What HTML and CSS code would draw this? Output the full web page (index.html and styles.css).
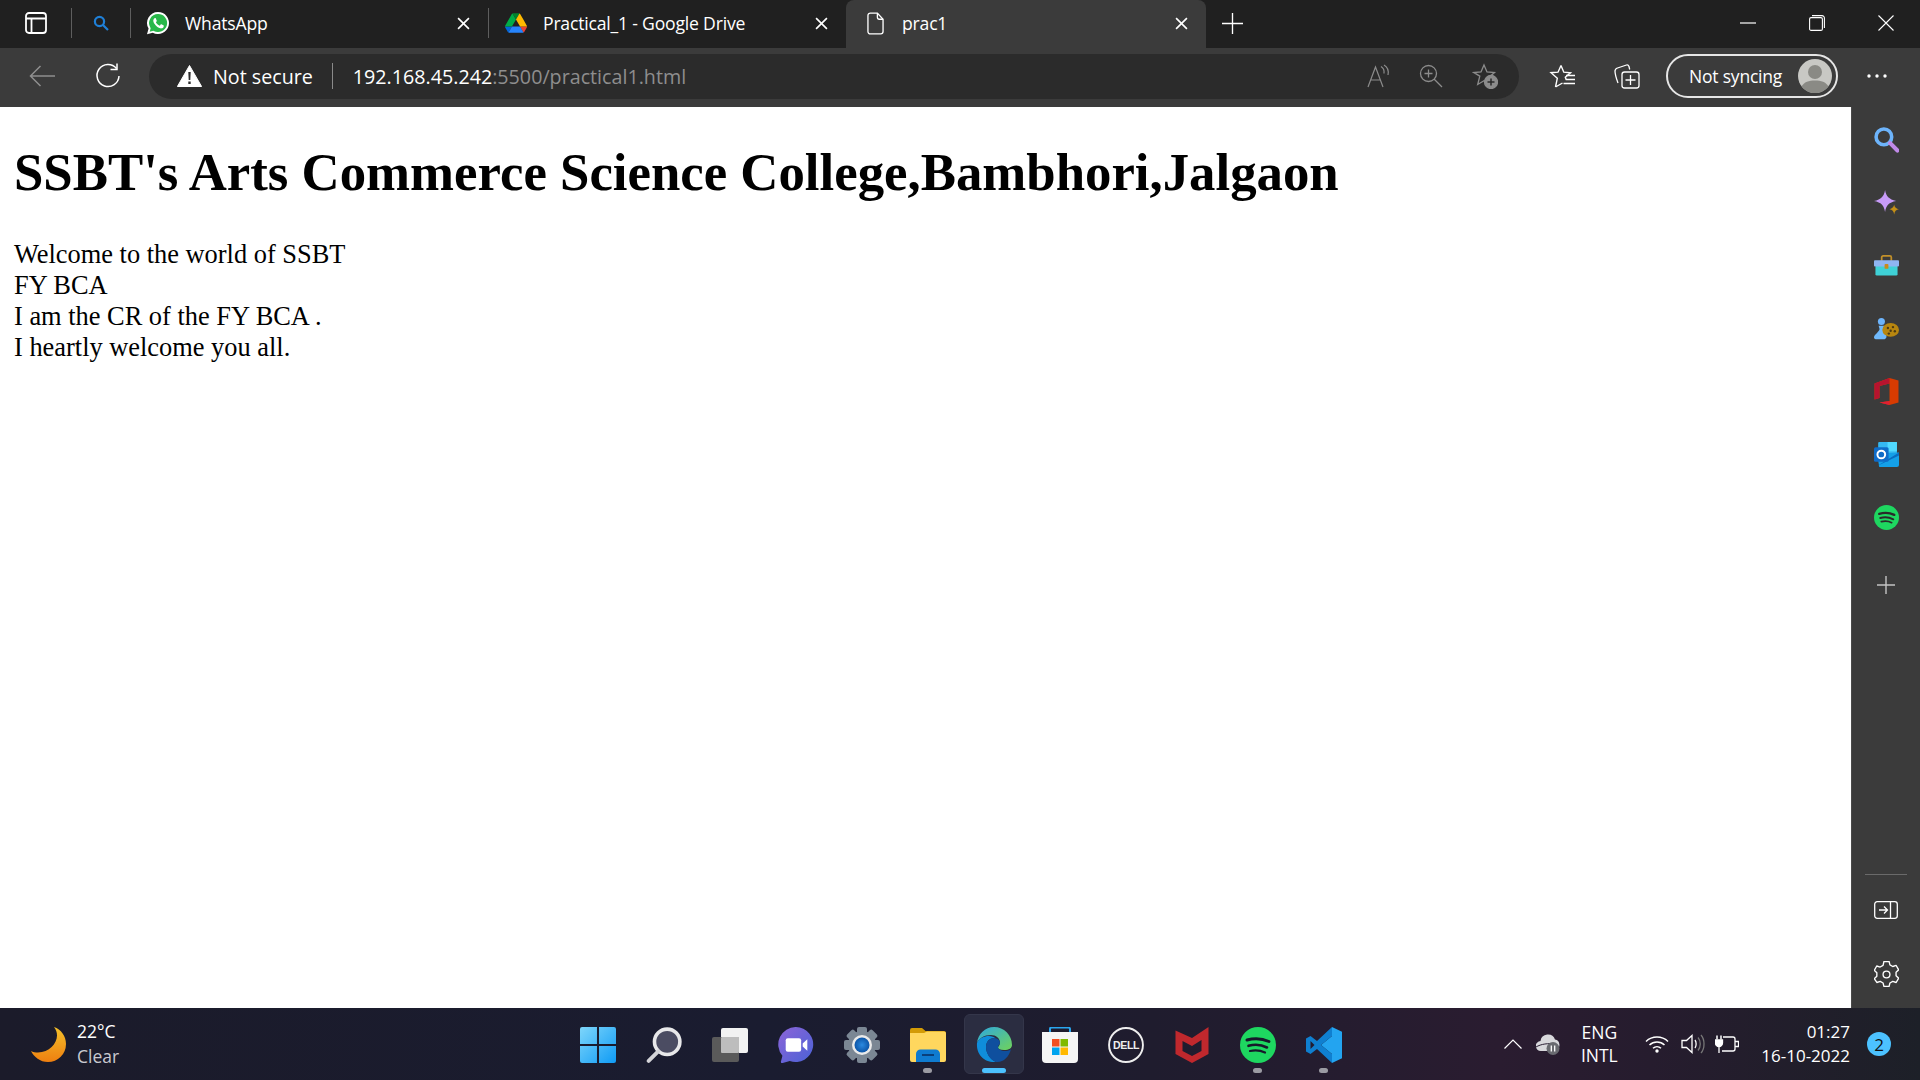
FILE: index.html
```html
<!DOCTYPE html>
<html lang="en">
<head>
<meta charset="utf-8">
<title>prac1</title>
<link rel="stylesheet" href="styles.css">
</head>
<body>
<header class="browser">
  <div class="tabstrip">
    <div class="strip-start">
      <svg class="ico workspace" viewBox="0 0 22 22" fill="none" stroke="#fff" stroke-width="1.8"><rect x="1" y="1" width="20" height="20" rx="3"/><path d="M1 6.5h20M6.5 6.5V21"/></svg>
      <span class="vsep first"></span>
      <svg class="ico mini-search" viewBox="0 0 16 16" fill="none" stroke="#1f7fd6" stroke-width="2.2"><circle cx="6.5" cy="6.5" r="4.6"/><path d="M10 10l5 5"/></svg>
      <span class="vsep"></span>
    </div>
    <div class="tab">
      <svg class="ico tab-fav" viewBox="0 0 24 24"><path d="M12 1a11 11 0 0 0-9.4 16.6L1 23.2l5.8-1.5A11 11 0 1 0 12 1z" fill="#fff"/><path d="M12 3a9 9 0 0 0-7.6 13.7l.3.4-1 3.6 3.7-1 .4.2A9 9 0 1 0 12 3z" fill="#29b84a"/><path d="M8.9 6.9c-.3 0-.7.1-1 .5-.4.4-1.2 1.2-1.2 2.8s1.2 3.3 1.4 3.5c.2.2 2.4 3.7 5.8 5 .9.3 1.9.4 2.6.3.8-.1 2.1-.9 2.3-1.7.3-.8.3-1.5.2-1.7l-2.7-1.4c-.3-.1-.5-.2-.7.1l-1 1.3c-.2.2-.4.3-.7.1-1.7-.7-3.1-2-4-3.5-.2-.3 0-.5.1-.6l.7-.9c.2-.2.2-.4.1-.6l-1.1-2.7c-.3-.6-.5-.5-.8-.5z" fill="#fff" transform="translate(1.6 1.2) scale(.85)"/></svg>
      <span class="tab-title">WhatsApp</span>
      <svg class="ico tab-x" viewBox="0 0 12 12" stroke="#fff" stroke-width="1.5" fill="none"><path d="M1 1l10 10M11 1L1 11"/></svg>
    </div>
    <span class="vsep tab-sep"></span>
    <div class="tab tab-drive">
      <svg class="ico tab-fav drive" viewBox="0 0 87.3 78"><path d="m6.6 66.85 3.85 6.65c.8 1.4 1.95 2.5 3.3 3.3l13.75-23.8h-27.5c0 1.55.4 3.1 1.2 4.5z" fill="#0066da"/><path d="m43.65 25-13.75-23.8c-1.35.8-2.5 1.9-3.3 3.3l-25.4 44a9.06 9.06 0 0 0 -1.2 4.5h27.5z" fill="#00ac47"/><path d="m73.55 76.8c1.35-.8 2.5-1.9 3.3-3.3l1.6-2.75 7.65-13.25c.8-1.4 1.2-2.95 1.2-4.5h-27.502l5.852 11.5z" fill="#ea4335"/><path d="m43.65 25 13.75-23.8c-1.35-.8-2.9-1.2-4.5-1.2h-18.5c-1.6 0-3.15.45-4.5 1.2z" fill="#00832d"/><path d="m59.8 53h-32.3l-13.75 23.8c1.35.8 2.9 1.2 4.5 1.2h50.8c1.6 0 3.15-.45 4.5-1.2z" fill="#2684fc"/><path d="m73.4 26.5-12.7-22c-.8-1.4-1.95-2.5-3.3-3.3l-13.75 23.8 16.15 28h27.45c0-1.55-.4-3.1-1.2-4.5z" fill="#ffba00"/></svg>
      <span class="tab-title">Practical_1 - Google Drive</span>
      <svg class="ico tab-x" viewBox="0 0 12 12" stroke="#fff" stroke-width="1.5" fill="none"><path d="M1 1l10 10M11 1L1 11"/></svg>
    </div>
    <div class="tab tab-active">
      <svg class="ico tab-fav file" viewBox="0 0 18 24" fill="none" stroke="#fff" stroke-width="1.4"><path d="M3.5 1h7.5l6 6.5V20.5a2.5 2.5 0 0 1-2.5 2.5h-11A2.5 2.5 0 0 1 1 20.5v-17A2.5 2.5 0 0 1 3.5 1z"/><path d="M11 1v4.5a2 2 0 0 0 2 2h4"/></svg>
      <span class="tab-title">prac1</span>
      <svg class="ico tab-x" viewBox="0 0 12 12" stroke="#fff" stroke-width="1.5" fill="none"><path d="M1 1l10 10M11 1L1 11"/></svg>
    </div>
    <svg class="ico new-tab" viewBox="0 0 22 22" stroke="#fff" stroke-width="1.4"><path d="M11 0v22M0 11h22"/></svg>
    <div class="window-controls">
      <svg class="ico win-min" viewBox="0 0 16 2" stroke="#fff" stroke-width="1.2"><path d="M0 1h16"/></svg>
      <svg class="ico win-max" viewBox="0 0 16 16" fill="none" stroke="#fff" stroke-width="1.1"><rect x=".6" y="2.6" width="12.8" height="12.8" rx="1.5"/><path d="M3 .6h10a2.4 2.4 0 0 1 2.4 2.4v10"/></svg>
      <svg class="ico win-close" viewBox="0 0 16 16" stroke="#fff" stroke-width="1.1"><path d="M.5.5l15 15M15.5.5l-15 15"/></svg>
    </div>
  </div>
  <div class="toolbar">
    <svg class="ico back" viewBox="0 0 26 22" fill="none" stroke="#8f8f8f" stroke-width="1.5"><path d="M26 11H1.5M11.5 1l-10 10 10 10"/></svg>
    <svg class="ico reload" viewBox="0 0 26 26" fill="none" stroke="#fff" stroke-width="1.5"><path d="M21.5 5.5A11 11 0 1 0 24 13"/><path d="M22 .5v6h-6.5"/></svg>
    <div class="addressbar">
      <svg class="ico warn" viewBox="0 0 25 22"><path d="M12.5.5L24.6 21.5H.4z" fill="#fff" stroke="#fff" stroke-linejoin="round"/><path d="M11.3 7h2.4l-.4 8h-1.6zM11.3 16.5h2.4v2.4h-2.4z" fill="#2b2b2b"/></svg>
      <span class="not-secure">Not secure</span>
      <span class="addr-sep"></span>
      <span class="url"><span class="url-host">192.168.45.242</span>:5500/practical1.html</span>
      <svg class="ico read" viewBox="0 0 24 24" fill="none" stroke="#8c8c8c" stroke-width="1.2"><path d="M1 23L8.5 3 16 23M3.5 16h10"/><path d="M14 2.5c2.5 1.5 3.5 3.5 3 7M17 1c3.5 2 5 5 4 10"/></svg>
      <svg class="ico zoom-in" viewBox="0 0 24 24" fill="none" stroke="#8c8c8c" stroke-width="1.3"><circle cx="9.5" cy="9.5" r="8"/><path d="M15 15l8 8M9.5 5.5v8M5.5 9.5h8"/></svg>
      <svg class="ico fav-add" viewBox="0 0 26 26" fill="none" stroke="#8c8c8c" stroke-width="1.3"><path d="M12 2l3 7 7.5.6-5.7 5 1.5 6.9-6.3-3.8-6.3 3.8 2.1-8.4L2 9.6 9 9z"/><circle cx="19" cy="19" r="6.5" fill="#8c8c8c"/><path d="M19 15.5v7M15.5 19h7" stroke="#2b2b2b" stroke-width="1.5"/></svg>
    </div>
    <svg class="ico favs" viewBox="0 0 26 26" fill="none" stroke="#fff" stroke-width="1.4"><path d="M12 2.5l2.8 6.7 6.7.5-5.2 4.4 1 2.9M6.5 24l1.8-8.700L2 9.700l7-.5L12 2.500M6.500 24l7-4"/><path d="M17 12.500h9M17 16.500h9M14.500 20.500h11.500"/></svg>
    <svg class="ico collect" viewBox="0 0 26 26" fill="none" stroke="#fff" stroke-width="1.3"><path d="M4 20c-1.5-4-3-9-3-12 0-1.5 1-2.5 2.5-3l9-3c1-.3 2 .2 2.5 1.5l.7 3"/><rect x="8" y="9" width="17" height="16" rx="2.5"/><path d="M16.5 12v10M11.500 17h10"/></svg>
    <div class="profile">
      <span class="profile-text">Not syncing</span>
      <svg class="avatar" viewBox="0 0 34 34"><circle cx="17" cy="17" r="17" fill="#c8c8c4"/><circle cx="17" cy="13" r="7" fill="#8a8a85"/><path d="M3.5 27.5C6 23 11 21.5 17 21.5S28 23 30.5 27.5A17 17 0 0 1 3.5 27.5z" fill="#8a8a85"/></svg>
    </div>
    <svg class="ico dots" viewBox="0 0 20 4" fill="#fff"><circle cx="2" cy="2" r="1.7"/><circle cx="10" cy="2" r="1.7"/><circle cx="18" cy="2" r="1.7"/></svg>
  </div>
</header>

<div class="workspace-area">
  <main class="page">
    <h1 class="page-title">SSBT's Arts Commerce Science College,Bambhori,Jalgaon</h1>
    <p class="page-text">Welcome to the world of SSBT<br>FY BCA<br>I am the CR of the FY BCA .<br>I heartly welcome you all.</p>
  </main>
  <aside class="sidebar">
    <div class="side-slot"><svg class="side-ico" viewBox="0 0 24 24" fill="none"><circle cx="9.5" cy="9.5" r="7.5" stroke="#6db4fb" stroke-width="3.4"/><path d="M15.5 15.5l7 7" stroke="#c08ae8" stroke-width="4" stroke-linecap="round"/></svg></div>
    <div class="side-slot"><svg class="side-ico" viewBox="0 0 26 26"><path d="M11.5 0c1 6.5 4 9.500 11.500 11.500-7.500 1.500-10.500 4.500-11.500 11.500-1-7-4-10-11.500-11.500C7.500 10 10.500 6.500 11.500 0z" fill="#c79bf8"/><path d="M21 15c.5 3 1.500 4 5 5-3 .5-4.500 2-5 5.500-.5-3.500-2-5-5-5.500 3-1 4.500-2 5-5z" fill="#c48f17"/></svg></div>
    <div class="side-slot"><svg class="side-ico" viewBox="0 0 26 22"><path d="M8 6V2.500A1.500 1.500 0 0 1 9.500 1h7A1.500 1.500 0 0 1 18 2.500V6" fill="none" stroke="#c2902a" stroke-width="1.8"/><rect x="1.500" y="11" width="23" height="10.500" rx="1.500" fill="#3fd1d6"/><rect y="5.500" width="26" height="6.500" rx="1" fill="#8fb5f2"/><rect x="11" y="9.500" width="4" height="5" rx="1" fill="#c98a1c"/></svg></div>
    <div class="side-slot"><svg class="side-ico" viewBox="0 0 27 23"><circle cx="8" cy="4" r="3.8" fill="#6db4fb"/><path d="M5 8.500h6L10 12c.3 2 1.500 3.500 3.500 5v3c0 2-1 3-2 3H2c-1.500 0-2-1-2-2 0-2 2-3.500 3-4.500C5 14.500 6 13 6 12z" fill="#70b9fb"/><ellipse cx="18" cy="13" rx="9" ry="7.5" fill="#b8860f"/><circle cx="15" cy="11" r="1.3" fill="#4d3a12"/><circle cx="20.5" cy="10" r="1.3" fill="#4d3a12"/><circle cx="18" cy="14" r="1.3" fill="#4d3a12"/><circle cx="22.5" cy="14.5" r="1.3" fill="#4d3a12"/><circle cx="16" cy="17" r="1.3" fill="#4d3a12"/></svg></div>
    <div class="side-slot"><svg class="side-ico" viewBox="0 0 24 27"><path d="M0 5.500L15 0l9 2.500v22L15 27l-10-2.500L15 23V5.500L5 8v12l-5 1.500z" fill="#d83b01"/><path d="M0 5.500L15 0v5.500L5 8v12l-5 1.500z" fill="#b7132f"/><path d="M5 24.500L15 27v-4z" fill="#e01f34"/></svg></div>
    <div class="side-slot"><svg class="side-ico" viewBox="0 0 24 24"><rect x="4" y="0" width="18" height="12" rx="1" fill="#35b8f1"/><rect x="13" y="0" width="9" height="9" fill="#50d9ff"/><path d="M3 11l21-1v12a2 2 0 0 1-2 2H5z" fill="#14a0e8"/><path d="M3 23l21-13v3z" fill="#0a6cc0"/><rect y="5" width="14" height="14" rx="1.5" fill="#0f6cc8"/><circle cx="7" cy="12" r="3.7" fill="none" stroke="#fff" stroke-width="1.9"/></svg></div>
    <div class="side-slot"><svg class="side-ico" viewBox="0 0 24 24"><circle cx="12" cy="12" r="12" fill="#1ed760"/><g fill="none" stroke="#2a2a2a" stroke-linecap="round"><path d="M5 8.500c5-1.500 10-1.200 14.500 1" stroke-width="2.2"/><path d="M6 12.500c4.500-1.200 8.500-.8 12.500 1.200" stroke-width="1.9"/><path d="M7 16c3.500-.8 7-.6 10 1" stroke-width="1.6"/></g></svg></div>
    <div class="side-slot side-plus"><svg class="side-ico-small" viewBox="0 0 18 18" stroke="#c4c4c4" stroke-width="1.4"><path d="M9 0v18M0 9h18"/></svg></div>
    <div class="side-rule"></div>
    <div class="side-slot"><svg class="side-ico-wide" viewBox="0 0 24 18" fill="none" stroke="#fff" stroke-width="1.3"><rect x=".7" y=".7" width="22.6" height="16.6" rx="2.5"/><path d="M16.500 1v16M5 9h8M10 5.500L13.500 9 10 12.500"/></svg></div>
    <div class="side-slot side-gear"><svg class="side-ico" viewBox="0 0 24 26" fill="none" stroke="#fff" stroke-width="1.3" stroke-linejoin="round"><path d="M9.500 1h5l.8 3.300 2.700 1.500 3.300-1 2.400 4.200-2.500 2.300v3.400l2.500 2.300-2.400 4.200-3.300-1-2.700 1.500-.8 3.300h-5l-.8-3.300-2.700-1.500-3.300 1L.2 17.500l2.500-2.300v-3.400L.2 9.500l2.400-4.200 3.300 1 2.800-1.500z" transform="translate(0 -.5)"/><circle cx="12" cy="13" r="3.3"/></svg></div>
  </aside>
</div>

<footer class="taskbar">
  <div class="weather">
    <svg class="moon" viewBox="0 0 35 35"><defs><linearGradient id="moonG" x1="0" y1="0" x2="0" y2="1"><stop offset="0" stop-color="#f4c02a"/><stop offset="1" stop-color="#ee7f10"/></linearGradient></defs><path d="M23 0c7 2.500 12 9 12 17a18 18 0 0 1-18 18C9 35 3 30 0 24c2 1 4.500 1.500 7 1.500 11 0 19-9 19-17 0-3-1-6-3-8.500z" fill="url(#moonG)"/></svg>
    <div class="weather-text"><span class="temp">22°C</span><span class="cond">Clear</span></div>
  </div>
  <div class="task-icons">
    <div class="task-btn"><svg class="task-ico" viewBox="0 0 35 35"><defs><linearGradient id="winG" x1="0" y1="0" x2="1" y2="1"><stop offset="0" stop-color="#7ed6fb"/><stop offset="1" stop-color="#0f9bf5"/></linearGradient></defs><path d="M0 2a2 2 0 0 1 2-2h14.500v16.500H0zM18.500 0H33a2 2 0 0 1 2 2v14.500H18.500zM0 18.500h16.500V35H2a2 2 0 0 1-2-2zM18.500 18.500H35V33a2 2 0 0 1-2 2H18.500z" fill="url(#winG)"/></svg></div>
    <div class="task-btn"><svg class="task-ico" viewBox="0 0 34 34"><circle cx="20" cy="14" r="12" fill="#4b4c62" stroke="#e8e8ea" stroke-width="3.4"/><path d="M11.500 23L2.500 32" stroke="#d4d4d8" stroke-width="3.6" stroke-linecap="round"/></svg></div>
    <div class="task-btn"><svg class="task-ico" viewBox="0 0 36 34"><rect x="9" y="0" width="27" height="25" rx="2" fill="#f2f2f2"/><rect x="0" y="9" width="27" height="25" rx="2" fill="#5a5a5a"/><rect x="9" y="9" width="18" height="16" rx="1" fill="#bdbdbd"/></svg></div>
    <div class="task-btn"><svg class="task-ico" viewBox="0 0 34 35"><defs><linearGradient id="chatG" x1="0" y1="0" x2="1" y2="1"><stop offset="0" stop-color="#8c64d8"/><stop offset="1" stop-color="#4a62d6"/></linearGradient></defs><path d="M17 0a17 17 0 1 1-6 33l-7 2c-1.500.3-2-.5-1.500-2l1.300-5A17 17 0 0 1 17 0z" fill="url(#chatG)"/><rect x="7" y="11" width="15" height="13" rx="2" fill="#fff"/><path d="M23.500 16l4.500-4v11l-4.500-4z" fill="#fff"/></svg></div>
    <div class="task-btn"><svg class="task-ico" viewBox="0 0 36 36"><defs><radialGradient id="gearG"><stop offset="0" stop-color="#2b8ae0"/><stop offset="1" stop-color="#0c55a8"/></radialGradient></defs><g fill="#7b8794"><circle cx="18" cy="18" r="14"/><rect x="13" y="0" width="10" height="36" rx="2"/><rect x="13" y="0" width="10" height="36" rx="2" transform="rotate(45 18 18)"/><rect x="13" y="0" width="10" height="36" rx="2" transform="rotate(90 18 18)"/><rect x="13" y="0" width="10" height="36" rx="2" transform="rotate(135 18 18)"/></g><circle cx="18" cy="18" r="10" fill="#eaeaea"/><circle cx="18" cy="18" r="7.5" fill="url(#gearG)"/></svg></div>
    <div class="task-btn"><svg class="task-ico" viewBox="0 0 36 34"><path d="M0 2a2 2 0 0 1 2-2h10l3.500 3H34a2 2 0 0 1 2 2v4H0z" fill="#d39b06"/><path d="M0 5h14l3-1.500H34a2 2 0 0 1 2 2V32a2 2 0 0 1-2 2H2a2 2 0 0 1-2-2z" fill="#ffd75e"/><path d="M6 34V26a4.500 4.500 0 0 1 4.500-4.500h15A4.500 4.500 0 0 1 30 26v8z" fill="#0f7bd0"/><rect x="12" y="26" width="12" height="2" fill="#0a3f7a"/></svg><span class="pip"></span></div>
    <div class="task-btn task-active"><svg class="task-ico" viewBox="0 0 36 36"><defs><linearGradient id="edgeA" x1="0" y1="0" x2="1" y2="1"><stop offset="0" stop-color="#2ea8e0"/><stop offset="1" stop-color="#6fd35a"/></linearGradient></defs><path d="M1 16C2 7 9 0 18 0c10 0 18 8 18 18 0 3-3 5-8 5-4 0-6-1-6-2.500 0-1 2-2 2-5 0-4-4-7.500-9-7.500-7 0-12 3.500-14 8z" fill="url(#edgeA)"/><path d="M1 16c2-5 7-7 12-7 3 0 5 1 6 2-7 0-9 5-9 9 0 6 4 12 10 15C9 36 0 28 1 16z" fill="#0f8ddb"/><path d="M19 11c3 .5 5 2.500 5 5 0 1.500-2 2-2 4 0 2 3 4 7 4 2.500 0 5-.5 6-2-2 8-8 14-15 13-6-2-10-9-10-15 0-5 3-9 9-9z" fill="#0f4f9e"/></svg><span class="pip pip-active"></span></div>
    <div class="task-btn"><svg class="task-ico" viewBox="0 0 36 36"><path d="M8 6V2a1.500 1.500 0 0 1 1.500-1.500h17A1.500 1.500 0 0 1 28 2v4" fill="none" stroke="#2aa6ee" stroke-width="2"/><path d="M0 5h36v27a4 4 0 0 1-4 4H4a4 4 0 0 1-4-4z" fill="#f5f5f5"/><rect x="10" y="12" width="7.5" height="7.5" fill="#f25022"/><rect x="18.5" y="12" width="7.5" height="7.5" fill="#7fba00"/><rect x="10" y="20.5" width="7.5" height="7.5" fill="#00a4ef"/><rect x="18.5" y="20.5" width="7.5" height="7.5" fill="#ffb900"/></svg></div>
    <div class="task-btn"><svg class="task-ico" viewBox="0 0 34 34"><circle cx="17" cy="17" r="16" fill="none" stroke="#eee" stroke-width="1.8"/><text class="dell" x="17" y="20.5">DELL</text></svg></div>
    <div class="task-btn"><svg class="task-ico" viewBox="0 0 33 36"><path fill-rule="evenodd" d="M0 3.500L16.500 11 33 0V27L16.500 36 0 27zM7 14l9.500 5L26 13v11l-9.500 5L7 24z" fill="#c0282d"/></svg></div>
    <div class="task-btn"><svg class="task-ico" viewBox="0 0 36 36"><circle cx="18" cy="18" r="18" fill="#1ed760"/><g fill="none" stroke="#17182a" stroke-linecap="round"><path d="M7 13c7-2 15-1.700 22 1.500" stroke-width="3"/><path d="M8.500 18.800c6.500-1.800 13-1.200 18.500 1.700" stroke-width="2.6"/><path d="M10 24c5-1.200 10-.9 15 1.500" stroke-width="2.2"/></g></svg><span class="pip"></span></div>
    <div class="task-btn"><svg class="task-ico" viewBox="0 0 36 36"><path d="M26 0l10 4.800v26.400L26 36V27L15 18 26 9z" fill="#23a4f0"/><path d="M26 0L11 14 4.500 9 0 11.500v13L4.500 27 11 22l15 14V27L15 18 26 9zM4.500 14L8.500 18 4.500 22z" fill-rule="evenodd" fill="#0f7fd0"/></svg><span class="pip"></span></div>
  </div>
  <div class="tray">
    <svg class="tray-chev" viewBox="0 0 18 10" fill="none" stroke="#fff" stroke-width="1.2"><path d="M.5 9.500L9 1l8.500 8.500"/></svg>
    <svg class="tray-cloud" viewBox="0 0 24 22"><path d="M5 18a5 5 0 0 1-.5-10A7.500 7.500 0 0 1 19 6.500 5.500 5.500 0 0 1 20 17l-2 1z" fill="#d8d8dc"/><path d="M0 14c5-3 12-4 20-3" stroke="#2a1f33" stroke-width="1" fill="none"/><circle cx="17" cy="15.500" r="6.5" fill="#696a70"/><path d="M15.300 12.500v6M18.700 12.500v6" stroke="#fff" stroke-width="1.3"/></svg>
    <div class="lang"><span>ENG</span><span>INTL</span></div>
    <svg class="tray-ico" viewBox="0 0 24 18" fill="none" stroke="#fff" stroke-width="1.5"><path d="M1 6.500a16 16 0 0 1 22 0M4.500 10a11 11 0 0 1 15 0M8 13.300a6 6 0 0 1 8 0"/><circle cx="12" cy="16" r="1.7" fill="#fff" stroke="none"/></svg>
    <svg class="tray-ico" viewBox="0 0 24 20" fill="none" stroke="#fff" stroke-width="1.3"><path d="M1 6.500h4.500L11 1.500v17l-5.500-5H1z"/><path d="M14 6c1.500 2 1.500 6 0 8" /><path d="M17 3.500c3 3.500 3 9.500 0 13M20 1c4 4.500 4 13.500 0 18" stroke="#777"/></svg>
    <svg class="tray-ico tray-power" viewBox="0 0 24 20" fill="none" stroke="#fff" stroke-width="1.3"><path d="M8 3h10a2 2 0 0 1 2 2v10a2 2 0 0 1-2 2H7M20 7.500h3.500v5H20"/><path d="M2 1.500v4M6 1.500v4" stroke-width="1.5"/><path d="M.5 6h7v3a3.500 3.500 0 0 1-7 0zM4 12v7" fill="#fff"/></svg>
    <div class="clock"><span>01:27</span><span>16-10-2022</span></div>
    <span class="notif">2</span>
  </div>
</footer>
</body>
</html>
```
FILE: styles.css
```css
* { box-sizing: border-box; }
html, body { margin: 0; height: 100%; }
body {
  display: flex;
  flex-direction: column;
  height: 1080px;
  overflow: hidden;
  font-family: "Open Sans", "Noto Sans", sans-serif;
  color: #fff;
  background: #fff;
}
.ico { display: block; flex: none; }

/* tab strip */
.browser { flex: none; }
.tabstrip {
  height: 48px;
  display: flex;
  align-items: center;
  background: #202020;
}
.strip-start { display: flex; align-items: center; width: 130px; flex: none; margin-bottom: 2px; }
.workspace { width: 22px; height: 22px; margin-left: 25px; }
.vsep { width: 1px; height: 30px; background: #5e5e5e; flex: none; }
.vsep.first { margin-left: 24px; }
.mini-search { width: 16px; height: 16px; margin: 0 21px 0 21px; }
.tab {
  width: 358px;
  height: 48px;
  flex: none;
  display: flex;
  align-items: center;
  padding: 0 18px 2px 16px;
}
.tab-sep { margin-right: -1px; margin-bottom: 2px; }
.tab-drive { padding-left: 17px; }
.tab-active {
  width: 360px;
  background: #3b3b3b;
  border-radius: 8px 8px 0 0;
  padding: 0 18px 2px 21px;
}
.tab-fav { width: 24px; height: 24px; margin-right: 15px; }
.tab-fav.drive { width: 22px; height: 20px; margin-right: 16px; }
.tab-fav.file { width: 17px; height: 23px; margin-right: 18px; }
.tab-title { flex: 1; font-size: 17.6px; white-space: nowrap; letter-spacing: -.2px; }
.tab-x { width: 13px; height: 13px; }
.new-tab { width: 21px; height: 21px; margin-left: 16px; margin-bottom: 2px; }
.window-controls { margin-left: auto; display: flex; align-items: center; width: 180px; margin-bottom: 2px; }
.win-min { width: 16px; height: 2px; }
.win-max { width: 16px; height: 16px; margin-left: 53px; }
.win-close { width: 16px; height: 16px; margin-left: 53px; }

/* toolbar */
.toolbar {
  height: 59px;
  padding-bottom: 3px;
  display: flex;
  align-items: center;
  background: #3b3b3b;
}
.back { width: 26px; height: 22px; margin-left: 29px; }
.reload { width: 26px; height: 26px; margin-left: 40px; }
.addressbar {
  width: 1370px;
  height: 45px;
  margin-left: 28px;
  flex: none;
  display: flex;
  align-items: center;
  background: #2b2b2b;
  border-radius: 23px;
  padding-left: 28px;
}
.warn { width: 25px; height: 22px; }
.not-secure { margin-left: 11px; font-size: 19.7px; white-space: nowrap; }
.addr-sep { width: 1px; height: 26px; background: #8a8a8a; margin-left: 19px; flex: none; }
.url { margin-left: 20px; font-size: 19.7px; color: #8e8e8e; white-space: nowrap; }
.url-host { color: #fff; }
.read { width: 24px; height: 24px; margin-left: auto; }
.zoom-in { width: 24px; height: 24px; margin-left: 28px; }
.fav-add { width: 26px; height: 26px; margin-left: 29px; margin-right: 21px; }
.favs { width: 26px; height: 26px; margin-left: 30px; }
.collect { width: 26px; height: 26px; margin-left: 39px; }
.profile {
  width: 172px;
  height: 44px;
  margin-left: 26px;
  flex: none;
  display: flex;
  align-items: center;
  justify-content: space-between;
  padding: 0 4px 0 21px;
  border: 2px solid #e6e6e6;
  border-radius: 22px;
}
.profile-text { font-size: 17.5px; white-space: nowrap; letter-spacing: -.2px; }
.avatar { width: 34px; height: 34px; display: block; flex: none; }
.dots { width: 20px; height: 4px; margin-left: 29px; }

/* content */
.workspace-area { flex: 1; min-height: 0; display: flex; }
.page {
  flex: 1;
  padding: 0 14px;
  background: #fff;
  color: #000;
  font-family: "Liberation Serif", "Times New Roman", serif;
  font-size: 26.4px;
}
.page-title { margin: 35px 0 0; font-size: 52.8px; font-weight: 700; line-height: 61px; white-space: nowrap; }
.page-title + .page-text { margin: 36px 0 0; line-height: 31px; }
.sidebar {
  width: 69px;
  flex: none;
  display: flex;
  flex-direction: column;
  align-items: center;
  padding: 1px 0 0;
  background: #3b3b3b;
  border-left: 1px solid #4a4a4a;
}
.side-slot { height: 63px; width: 100%; flex: none; display: flex; align-items: center; justify-content: center; }
.side-gear { height: 67px; }
.side-ico { width: 25px; height: 27px; display: block; }
.side-ico-small { width: 18px; height: 18px; display: block; }
.side-ico-wide { width: 24px; height: 18px; display: block; }
.side-plus { margin-top: 4px; }
.side-rule { width: 42px; height: 1px; background: #6a6a6a; margin-top: auto; margin-bottom: 3px; flex: none; }

/* taskbar */
.taskbar {
  height: 72px;
  flex: none;
  display: grid;
  grid-template-columns: 1fr auto 1fr;
  align-items: center;
  background: linear-gradient(90deg, #1b1b2a 0%, #1a1c30 40%, #1f1c2e 60%, #2a1c30 78%, #261c2e 86%, #1d2028 100%);
}
.weather { display: flex; align-items: center; padding-left: 31px; }
.moon { width: 35px; height: 35px; display: block; flex: none; }
.weather-text { display: flex; flex-direction: column; margin-left: 11px; font-size: 17.5px; line-height: 25px; }
.temp { color: #fff; }
.cond { color: #c9c9d0; }
.task-icons { display: flex; margin-left: 1px; }
.task-btn {
  width: 66px;
  height: 60px;
  position: relative;
  display: flex;
  align-items: center;
  justify-content: center;
}
.task-active { background: #2b2d41; border-radius: 6px; width: 60px; margin: 0 3px; border: 1px solid #34364a; }
.task-ico { width: 36px; height: 36px; display: block; margin-top: 1px; }
.dell { font: 700 10px "Liberation Sans", sans-serif; fill: #eee; text-anchor: middle; letter-spacing: -.4px; }
.pip { position: absolute; left: 50%; bottom: 1px; width: 9px; height: 5px; margin-left: -4.5px; border-radius: 3px; background: #9b9ba3; }
.pip-active { width: 24px; margin-left: -12px; background: #4cc2ff; bottom: 0; }
.tray { display: flex; align-items: center; justify-content: flex-end; padding-right: 29px; }
.tray-chev { width: 18px; height: 10px; display: block; }
.tray-cloud { width: 24px; height: 22px; display: block; margin-left: 14px; }
.lang { display: flex; flex-direction: column; align-items: center; font-size: 17.5px; line-height: 23px; margin-left: 21px; width: 37px; }
.tray-ico { width: 24px; height: 20px; display: block; margin-left: 12px; }
.lang + .tray-ico { margin-left: 27px; }
.tray-power { margin-left: 10.5px; }
.clock { display: flex; flex-direction: column; align-items: flex-end; font-size: 17px; line-height: 24px; margin-left: 22px; }
.notif {
  width: 24px;
  height: 24px;
  margin-left: 17px;
  border-radius: 50%;
  background: #4cc2ff;
  color: #111;
  font-size: 17px;
  display: flex;
  align-items: center;
  justify-content: center;
}
```
